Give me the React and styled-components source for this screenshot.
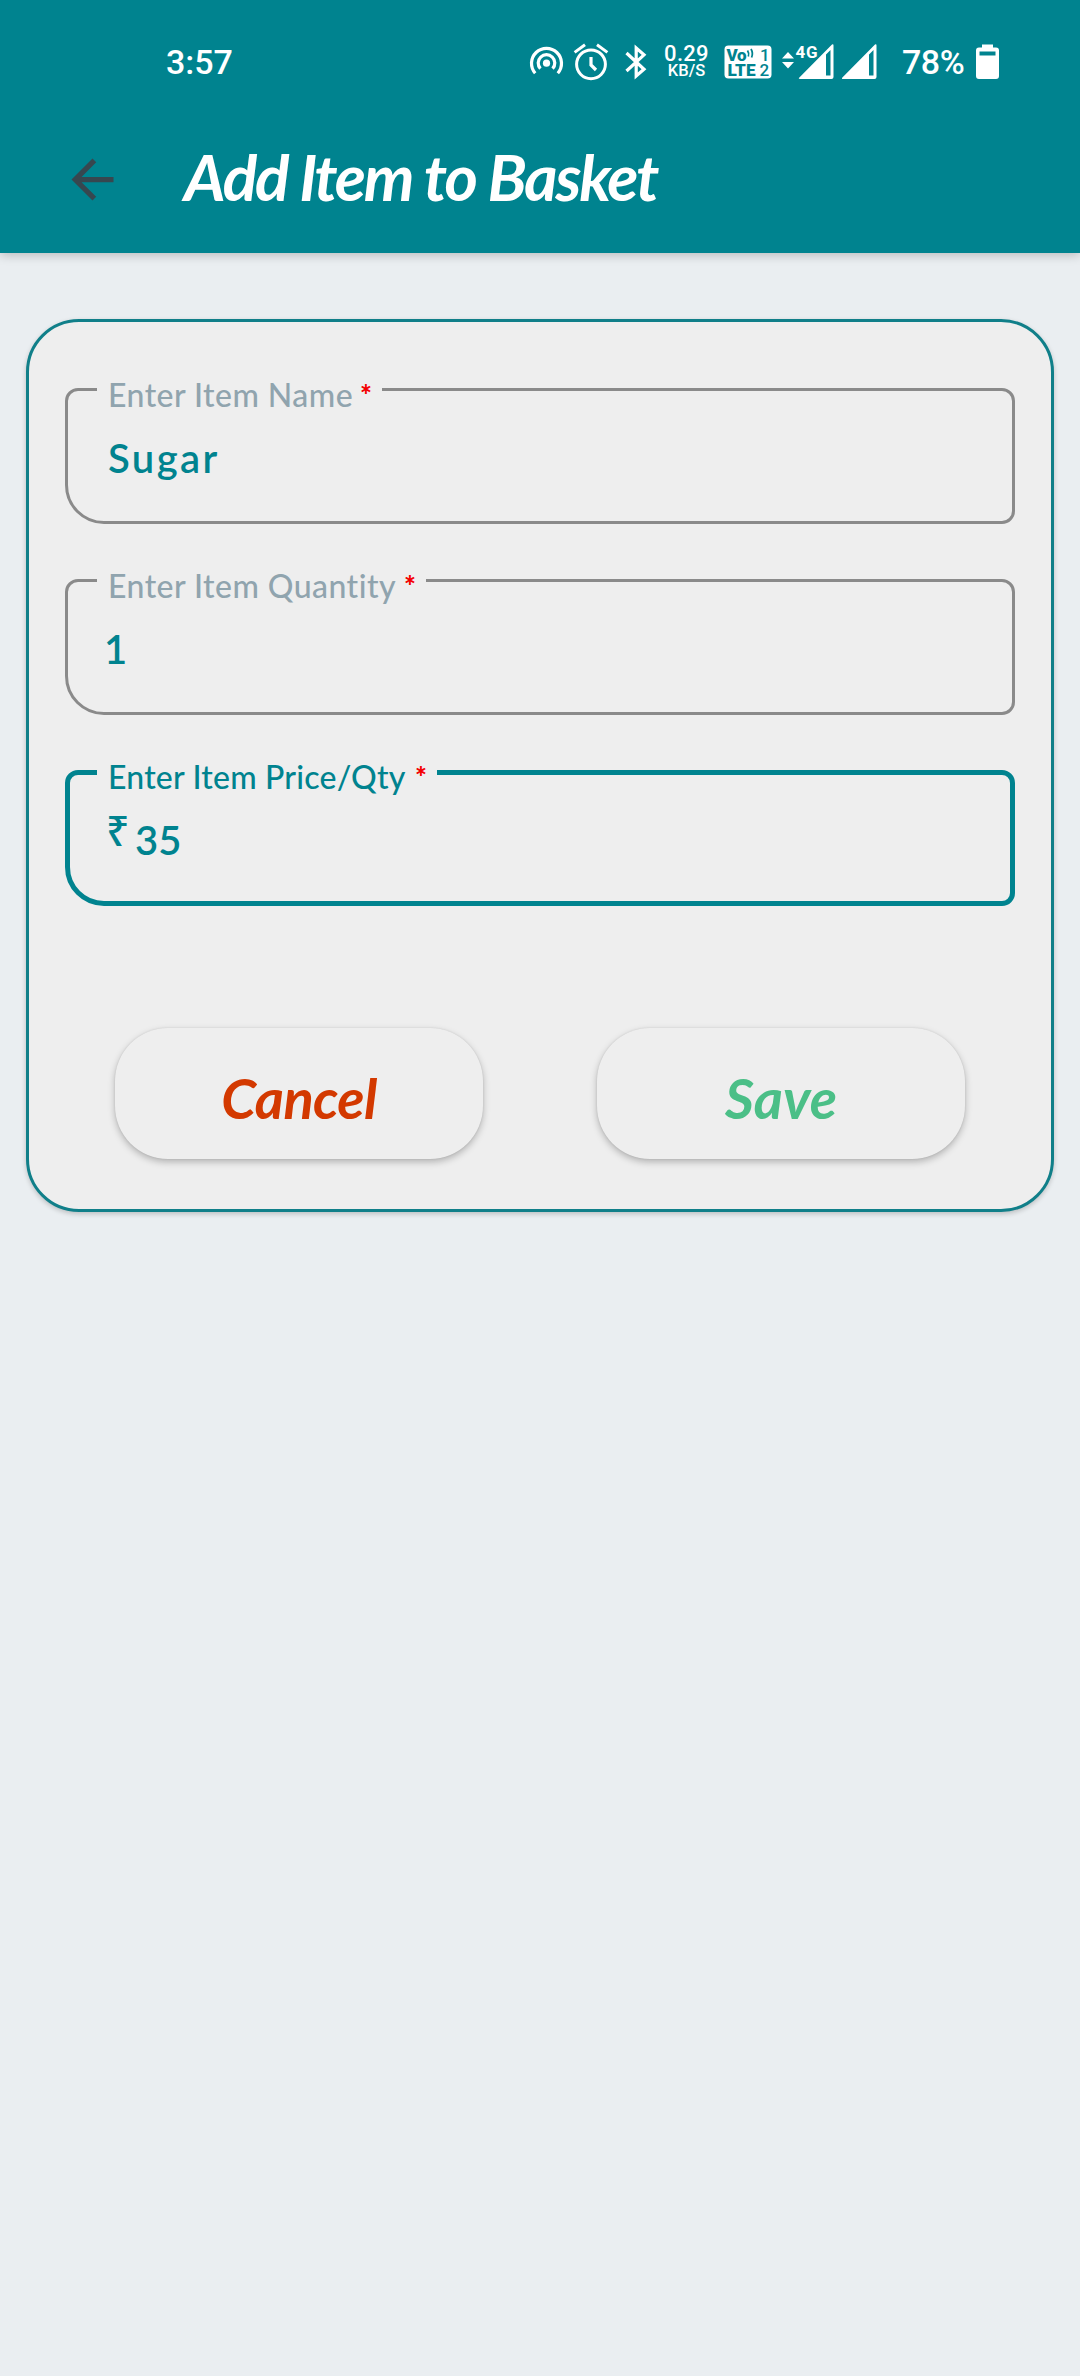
import React from "react";
import styled, { createGlobalStyle } from "styled-components";

const TEAL = "#00838f";

const GlobalStyle = createGlobalStyle`
  * { box-sizing: border-box; }
  body { margin: 0; background: #eaeef1; }
  button, input { font: inherit; }
`;

const Screen = styled.div`
  width: 1080px;
  min-height: 2376px;
  background: #eaeef1;
  font-family: Lato, "Noto Sans", sans-serif;
`;

const Header = styled.header`
  height: 253px;
  background: ${TEAL};
  box-shadow: 0 2px 10px rgba(0, 0, 0, 0.22);
`;

const StatusBar = styled.div`
  height: 124px;
  padding: 0 81px 0 166px;
  display: flex;
  align-items: center;
  justify-content: space-between;
  color: #fff;
  font-family: Roboto, sans-serif;
`;

const StatusText = styled.span`
  width: ${(p) => p.$width}px;
  font-size: 34px;
  line-height: 40px;
  font-weight: 500;
  letter-spacing: ${(p) => p.$spacing || 0}px;
  white-space: nowrap;
`;

const StatusIcons = styled.div`
  display: flex;
  align-items: center;
`;

const Slot = styled.div`
  display: flex;
  margin-left: ${(p) => p.$before}px;
  svg { display: block; }
`;

const Speed = styled.div`
  width: 45px;
  display: flex;
  flex-direction: column;
  align-items: center;
  font-weight: 500;
  font-size: 22px;
  line-height: 17px;
  letter-spacing: 0.3px;
`;

const SpeedUnit = styled.span`
  font-size: 16.500px;
  line-height: 17px;
  letter-spacing: 0;
`;

const AppBar = styled.div`
  height: 111px;
  padding-left: 61px;
  display: flex;
  align-items: center;
`;

const BackButton = styled.button`
  width: 63px;
  height: 63px;
  padding: 0;
  border: 0;
  background: none;
  display: flex;
`;

const Title = styled.h1`
  margin: 0 0 6px 60px;
  font-size: 64px;
  line-height: 80px;
  font-style: italic;
  font-weight: 700;
  letter-spacing: -2.2px;
  color: #fff;
  white-space: nowrap;
`;

const Card = styled.form`
  margin: 66px 26px 0;
  height: 893px;
  padding: 66px 36px 0;
  border: 3px solid #107f89;
  border-radius: 53px;
  background: #eeeeee;
  box-shadow: 0 2px 5px rgba(0, 0, 0, 0.2);
`;

const Fields = styled.div`
  display: flex;
  flex-direction: column;
  gap: 55px;
`;

const Field = styled.div`
  position: relative;
  height: 136px;
  display: flex;
  align-items: center;
  padding-left: ${(p) => (p.$active ? 36 : 40)}px;
  border: ${(p) => (p.$active ? `5px solid ${TEAL}` : "3px solid #8a8a8a")};
  border-radius: 13px 13px 13px 39px;
  color: ${TEAL};
`;

const Label = styled.label`
  position: absolute;
  top: ${(p) => (p.$active ? -16 : -14)}px;
  left: ${(p) => (p.$active ? 27 : 29)}px;
  width: ${(p) => p.$width}px;
  height: 40px;
  padding: 0 10px 0 11px;
  display: flex;
  justify-content: space-between;
  background: #eeeeee;
  color: ${(p) => (p.$active ? TEAL : "#90a4ae")};
  font-size: 32px;
  line-height: 36px;
  font-weight: 500;
  letter-spacing: ${(p) => p.$spacing}px;
  white-space: nowrap;
`;

const Star = styled.span`
  color: #f40000;
  font-size: 28px;
  line-height: 35px;
  font-weight: 900;
  letter-spacing: 0;
`;

const Prefix = styled.span`
  font-family: "Noto Sans", sans-serif;
  font-size: 41px;
  line-height: 48px;
  font-weight: 500;
  width: 29px;
  margin-top: -16px;
`;

const Value = styled.span`
  font-size: 40px;
  line-height: 48px;
  font-weight: 600;
  letter-spacing: ${(p) => p.$spacing || 0}px;
  margin-top: 4px;
  margin-left: ${(p) => p.$shift || 0}px;
`;

const Actions = styled.div`
  margin-top: 122px;
  padding: 0 50px;
  display: flex;
  justify-content: space-between;
`;

const ActionButton = styled.button`
  width: 368px;
  height: 131px;
  padding: 8px 0 0;
  border: 0;
  border-radius: 53px;
  background: #eeeeee;
  box-shadow: 0 3px 7px rgba(0, 0, 0, 0.25), 0 0 2px rgba(0, 0, 0, 0.1);
  color: ${(p) => p.$color};
  font-size: 56px;
  line-height: 64px;
  font-style: italic;
  font-weight: 700;
  letter-spacing: ${(p) => p.$spacing}px;
`;

const HotspotIcon = () => (
  <svg width="35" height="36" viewBox="0 0 35 36" fill="none" stroke="#fff" strokeWidth="3.2">
    <path d="M6.2 29.2A15 15 0 1 1 28.8 29.2" />
    <path d="M11.4 24.6A8.3 8.3 0 1 1 23.6 24.6" />
    <circle cx="17.5" cy="19.2" r="3.6" fill="#fff" stroke="none" />
  </svg>
);

const AlarmIcon = () => (
  <svg width="36" height="38" viewBox="0 0 36 38" fill="none" stroke="#fff" strokeWidth="3">
    <circle cx="18" cy="21.3" r="14.4" />
    <path d="M1.6 9.4 12 1.8M34.4 9.4 24 1.8" />
    <path d="M18 14v8l5 5" strokeWidth="3.2" />
  </svg>
);

const BluetoothIcon = () => (
  <svg width="24" height="36" viewBox="0 0 24 36" fill="none" stroke="#fff" strokeWidth="3.2">
    <path d="M2.5 9 20 25.3 12.2 32V4L20 10.8 2.5 27" />
  </svg>
);

const VolteIcon = () => (
  <svg width="48" height="36" viewBox="0 0 48 36" fontFamily="Roboto, sans-serif" fontWeight="900">
    <rect x="0.5" y="1.5" width="47" height="33" rx="4" fill="#fff" />
    <text x="2.5" y="16.500" fontSize="17" fill={TEAL} textLength="20">Vo</text>
    <path d="M23.5 6.5q2 3 .8 6M27 5q2.4 4 .6 8.5" stroke={TEAL} strokeWidth="1.8" fill="none" />
    <text x="3.5" y="32.2" fontSize="17" fill={TEAL} textLength="28" lengthAdjust="spacingAndGlyphs">LTE</text>
    <text x="36" y="16.500" fontSize="17" fontWeight="500" fill={TEAL}>1</text>
    <text x="35.5" y="32.2" fontSize="17" fontWeight="500" fill={TEAL}>2</text>
  </svg>
);

const DataSignalIcon = () => (
  <svg width="53" height="38" viewBox="0 0 53 38" fill="#fff">
    <path d="M1 15.5 7 9l6 6.500zM1 19h12l-6 6.500z" />
    <path fillRule="evenodd" d="M51 1.500q1.500-1 1.500 1V34q0 2-2 2H19q-2 0-.6-1.400zM45 11.500V32.500h4.500V7z" />
    <text x="14.500" y="14.500" fontSize="17" fontWeight="700" fontFamily="Roboto, sans-serif" textLength="22">4G</text>
  </svg>
);

const SignalIcon = () => (
  <svg width="35" height="38" viewBox="18 0 35 38" fill="#fff">
    <path fillRule="evenodd" d="M51 1.500q1.500-1 1.500 1V34q0 2-2 2H19q-2 0-.6-1.400zM45 11.500V32.500h4.500V7z" />
  </svg>
);

const BatteryIcon = () => (
  <svg width="23" height="38" viewBox="0 0 23 38">
    <path fillRule="evenodd" fill="#fff" d="M6 1.500h11v3h3q3 0 3 3V33q0 3-3 3H3q-3 0-3-3V7.500q0-3 3-3h3zM3.500 8.500v4h16v-4z" />
  </svg>
);

const BackIcon = () => (
  <svg width="63" height="63" viewBox="0 0 24 24" fill="#37474f">
    <path d="M20 11H7.830l5.590-5.590L12 4l-8 8 8 8 1.410-1.410L7.830 13H20v-2z" />
  </svg>
);

const fields = [
  { label: "Enter Item Name", value: "Sugar", width: 285, spacing: 0.45, valueSpacing: 2.4 },
  { label: "Enter Item Quantity", value: "1", width: 329, spacing: 0.45, shift: -4 },
  { label: "Enter Item Price/Qty", value: "35", width: 340, spacing: 0.2, prefix: "₹", active: true },
];

export default function App() {
  return (
    <Screen>
      <GlobalStyle />
      <Header>
        <StatusBar>
          <StatusText $width={80}>3:57</StatusText>
          <StatusIcons>
            <Slot $before={0}><HotspotIcon /></Slot>
            <Slot $before={9}><AlarmIcon /></Slot>
            <Slot $before={15}><BluetoothIcon /></Slot>
            <Slot $before={16}>
              <Speed>
                0.29
                <SpeedUnit>KB/S</SpeedUnit>
              </Speed>
            </Slot>
            <Slot $before={15}><VolteIcon /></Slot>
            <Slot $before={9}><DataSignalIcon /></Slot>
            <Slot $before={8}><SignalIcon /></Slot>
            <Slot $before={25}><StatusText $width={63} $spacing={-0.5}>78%</StatusText></Slot>
            <Slot $before={11}><BatteryIcon /></Slot>
          </StatusIcons>
        </StatusBar>
        <AppBar>
          <BackButton type="button" aria-label="Back"><BackIcon /></BackButton>
          <Title>Add Item to Basket</Title>
        </AppBar>
      </Header>
      <Card>
        <Fields>
          {fields.map((f) => (
            <Field key={f.label} $active={f.active}>
              <Label $active={f.active} $width={f.width} $spacing={f.spacing}>
                {f.label}
                <Star>*</Star>
              </Label>
              {f.prefix && <Prefix>{f.prefix}</Prefix>}
              <Value $spacing={f.valueSpacing} $shift={f.shift}>{f.value}</Value>
            </Field>
          ))}
        </Fields>
        <Actions>
          <ActionButton type="button" $color="#d33900" $spacing={-0.6}>Cancel</ActionButton>
          <ActionButton type="button" $color="#4bbf87" $spacing={0}>Save</ActionButton>
        </Actions>
      </Card>
    </Screen>
  );
}
